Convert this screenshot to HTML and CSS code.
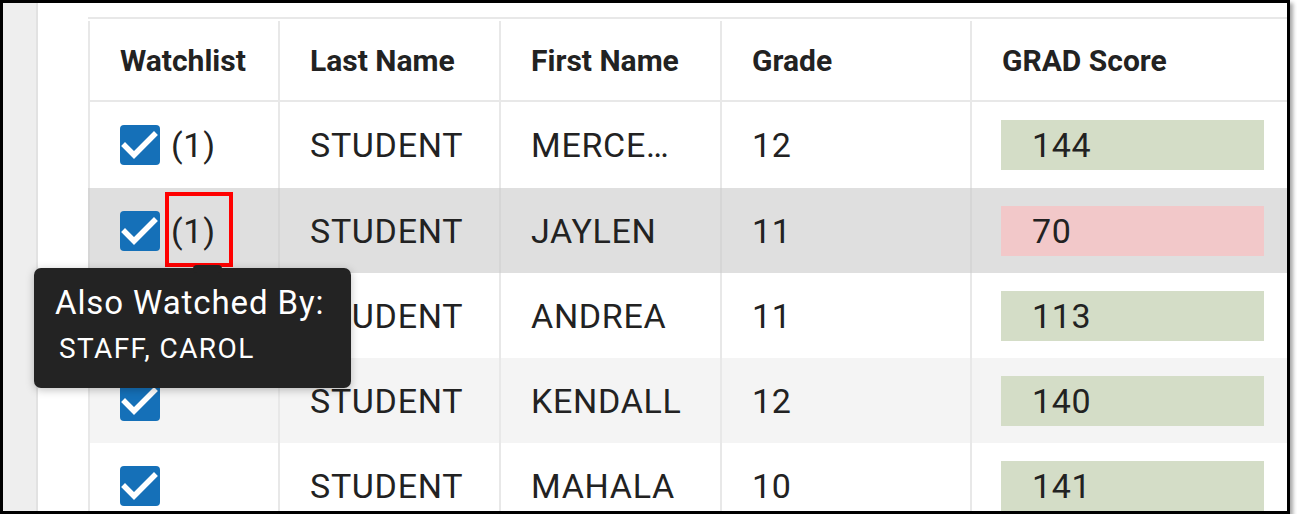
FILE: index.html
```html
<!DOCTYPE html>
<html lang="en">
<head>
<meta charset="utf-8">
<title>Watchlist</title>
<link rel="stylesheet" href="styles.css">
</head>
<body>
<div class="frame">
  <div class="rail"></div>
  <div class="main">
    <div class="grid">
      <div class="row head">
        <div class="cell">Watchlist</div>
        <div class="cell">Last Name</div>
        <div class="cell">First Name</div>
        <div class="cell">Grade</div>
        <div class="cell">GRAD Score</div>
      </div>
      <div class="row first">
        <div class="cell watch"><span class="box"><svg viewBox="0 0 40 40"><polyline points="5,21 14,30 34,10"/></svg></span><span class="count">(1)</span></div>
        <div class="cell">STUDENT</div>
        <div class="cell"><span class="trunc" title="MERCEDES">MERCE…</span></div>
        <div class="cell">12</div>
        <div class="cell"><span class="score good">144</span></div>
      </div>
      <div class="row hover">
        <div class="cell watch"><span class="box"><svg viewBox="0 0 40 40"><polyline points="5,21 14,30 34,10"/></svg></span><span class="count">(1)<span class="mark"></span></span></div>
        <div class="cell">STUDENT</div>
        <div class="cell">JAYLEN</div>
        <div class="cell">11</div>
        <div class="cell"><span class="score bad">70</span></div>
      </div>
      <div class="row">
        <div class="cell watch"><span class="box"><svg viewBox="0 0 40 40"><polyline points="5,21 14,30 34,10"/></svg></span></div>
        <div class="cell">STUDENT</div>
        <div class="cell">ANDREA</div>
        <div class="cell">11</div>
        <div class="cell"><span class="score good">113</span></div>
      </div>
      <div class="row stripe">
        <div class="cell watch"><span class="box"><svg viewBox="0 0 40 40"><polyline points="5,21 14,30 34,10"/></svg></span></div>
        <div class="cell">STUDENT</div>
        <div class="cell">KENDALL</div>
        <div class="cell">12</div>
        <div class="cell"><span class="score good">140</span></div>
      </div>
      <div class="row">
        <div class="cell watch"><span class="box"><svg viewBox="0 0 40 40"><polyline points="5,21 14,30 34,10"/></svg></span></div>
        <div class="cell">STUDENT</div>
        <div class="cell">MAHALA</div>
        <div class="cell">10</div>
        <div class="cell"><span class="score good">141</span></div>
      </div>
    </div>
  </div>
  <div class="tooltip">
    <div class="tip-title">Also Watched By:</div>
    <div class="tip-body">STAFF, CAROL</div>
  </div>
</div>
</body>
</html>
```
FILE: styles.css
```css
* { box-sizing: border-box; }
html, body { margin: 0; padding: 0; background: #ffffff; }
body { font-family: Roboto, "Liberation Sans", sans-serif; color: #222222; }

.frame {
  position: relative;
  width: 1290px;
  height: 514px;
  border: 3px solid #000000;
  box-shadow: 3px 3px 4px rgba(0, 0, 0, 0.35);
  display: flex;
  overflow: hidden;
  background: #ffffff;
}

.rail {
  width: 35px;
  flex: none;
  background: #eeeeee;
  border-right: 2px solid #e2e2e2;
}

.main {
  flex: 1;
  padding: 14px 0 0 50px;
  overflow: hidden;
}

.grid {
  border-top: 2px solid #e8e8e8;
  width: 1199px;
}

.row {
  display: grid;
  grid-template-columns: 190px 221px 221px 250px 317px;
  height: 85px;
  font-size: 34px;
  letter-spacing: 0.7px;
}
.row.first { height: 86px; }
.row.head {
  height: 83px;
  border-bottom: 2px solid #e8e8e8;
  font-weight: 700;
  font-size: 30px;
  letter-spacing: 0;
  padding-top: 2px;
}
.row.hover { background: #dfdfdf; }
.row.stripe { background: #f4f4f4; }

.cell {
  border-left: 2px solid #e8e8e8;
  padding-left: 30px;
  display: flex;
  align-items: center;
  white-space: nowrap;
  overflow: hidden;
  min-width: 0;
}
.row.hover .cell { border-left-color: #d6d6d6; }

.trunc { display: block; }

.watch { gap: 11px; overflow: visible; }

.box {
  width: 40px;
  height: 40px;
  border-radius: 4px;
  background: #1570b8;
  display: block;
  flex: none;
}
.box svg { width: 40px; height: 40px; display: block; }
.box polyline {
  fill: none;
  stroke: #ffffff;
  stroke-width: 5.5;
  stroke-linecap: square;
}

.count { position: relative; }
.mark {
  position: absolute;
  left: -6px;
  right: -17px;
  top: -19px;
  bottom: -16px;
  border: 4px solid #ff0000;
}

.score {
  display: flex;
  align-items: center;
  width: 263px;
  height: 50px;
  margin-left: -1px;
  padding-left: 31px;
}
.score.good { background: #d4ddc7; }
.score.bad { background: #f2c8c9; }

.tooltip {
  position: absolute;
  left: 31px;
  top: 265px;
  width: 317px;
  height: 120px;
  background: #232323;
  color: #ffffff;
  border-radius: 7px;
  padding: 14px 0 0 21px;
  box-shadow: 0 2px 8px rgba(0, 0, 0, 0.25);
}
.tooltip::before {
  content: "";
  position: absolute;
  left: 159px;
  top: -3px;
  width: 29px;
  height: 8px;
  border-radius: 4px;
  background: #232323;
}
.tip-title { font-size: 33px; line-height: 42px; letter-spacing: 0.9px; }
.tip-body { font-size: 28px; line-height: 34px; letter-spacing: 1.4px; padding-left: 4px; margin-top: 8px; }
```
